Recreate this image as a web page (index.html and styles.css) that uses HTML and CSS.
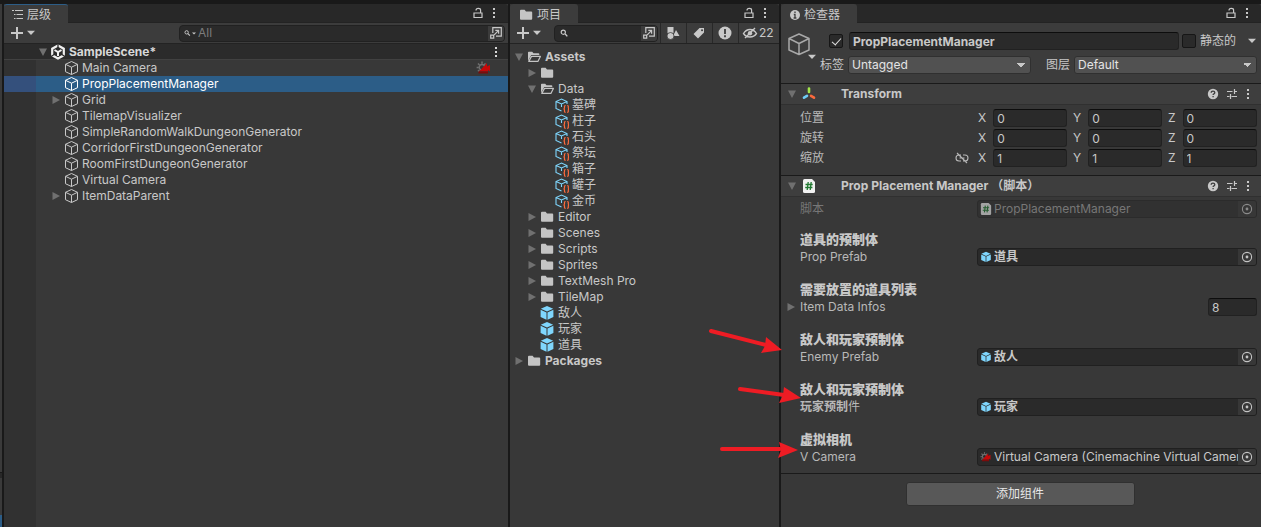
FILE: index.html
```html
<!DOCTYPE html>
<html lang="zh-CN">
<head>
<meta charset="utf-8">
<title>SampleScene</title>
<link rel="stylesheet" href="styles.css">
</head>
<body>
<svg class="defs" aria-hidden="true">
  <symbol id="cube" viewBox="0 0 16 16"><path d="M8.500 1.500 14.500 4.300v7.400L8.500 14.500l-6-2.800V4.300zM2.500 4.300l6 2.900 6-2.900M8.500 7.200v7.300" fill="none" stroke="currentColor" stroke-linejoin="round"/></symbol>
  <symbol id="prefab" viewBox="0 0 16 16"><path d="M8 1 14.200 3.800 8 6.600 1.800 3.800z" fill="#7fd6fd"/><path d="M1.600 4.700 7.500 7.400v7.400L1.600 12z" fill="#7fd6fd"/><path d="M14.400 4.700 8.500 7.400v7.400l5.900-2.800z" fill="#7fd6fd"/></symbol>
  <symbol id="asset" viewBox="0 0 16 16"><path d="M8.500 14 3 11.500v-7L8.500 2 14 4.500V7M3 4.500 8.500 7 14 4.500M8.500 7v3" fill="none" stroke="#7fd6fd" stroke-width="1.100"/><path d="M12.600 8.500c-1.500 0-1 1.500-1.100 2.300 0 .8-.5 1.100-1 1.100.5 0 1 .3 1 1.100.1.800-.4 2.300 1.100 2.300M14.200 8.500c1.500 0 1 1.500 1.100 2.300 0 .8.500 1.100 1 1.100-.5 0-1 .3-1 1.100-.1.800.4 2.300-1.100 2.300" fill="none" stroke="#ff6b3d" stroke-width="1.200"/></symbol>
  <symbol id="folder" viewBox="0 0 16 16"><path d="M2 3.800q0-1 1-1h3.600l1.400 1.600h5.200q1 0 1 1v6.400q0 1-1 1H3q-1 0-1-1z" fill="#c4c4c4"/></symbol>
  <symbol id="folder-open" viewBox="0 0 16 16"><path d="M2 12V3.600q0-.8.8-.8h3.400l1.300 1.500h5q.8 0 .8.800v1H5.200z" fill="#c4c4c4"/><path d="M2.800 12.400 5.500 7.400h8.900l-2.500 5z" fill="none" stroke="#c4c4c4" stroke-width="1.200" stroke-linejoin="round"/></symbol>
  <symbol id="right" viewBox="0 0 10 10"><path d="M1.500 1 9 5 1.500 9z" fill="#707070"/></symbol>
  <symbol id="down" viewBox="0 0 10 10"><path d="M1 1.500h8L5 9z" fill="#707070"/></symbol>
  <symbol id="caret" viewBox="0 0 8 6"><path d="M0 .8h8L4 5z" fill="currentColor"/></symbol>
  <symbol id="lock" viewBox="0 0 12 12"><path d="M2 6h8v4.500H2zM8.600 6V3.200Q8.600 1.400 6.300 1.400T4 3.400" fill="none" stroke="currentColor" stroke-width="1.200"/></symbol>
  <symbol id="dots" viewBox="0 0 4 12"><path d="M1 1h2v2H1zM1 5h2v2H1zM1 9h2v2H1z" fill="currentColor"/></symbol>
  <symbol id="plus" viewBox="0 0 12 12"><path d="M5 0h2v5h5v2H7v5H5V7H0V5h5z" fill="currentColor"/></symbol>
  <symbol id="search" viewBox="0 0 10 8"><circle cx="3.300" cy="3.200" r="2.100" fill="none" stroke="currentColor" stroke-width="1.200"/><path d="m5 4.800 2.300 2.600" stroke="currentColor" stroke-width="1.400"/></symbol>
  <symbol id="popup" viewBox="0 0 12 12"><path d="M2.800 6V.7h8.500v8.500H6" fill="none" stroke="currentColor" stroke-width="1.200"/><path d="M.7 8.200h3v3h-3zM4.200 7.800l4-4M5.300 3.400h3.300v3.300" fill="none" stroke="currentColor" stroke-width="1.200"/></symbol>
  <symbol id="help" viewBox="0 0 12 12"><circle cx="6" cy="6" r="5.200" fill="currentColor"/><path d="M4.200 4.800q0-1.700 1.800-1.700t1.800 1.500q0 .9-.9 1.300-.8.400-.8 1.100M6.100 8v1.200" fill="none" stroke="#3e3e3e" stroke-width="1.300"/></symbol>
  <symbol id="sliders" viewBox="0 0 12 12"><path d="M1 3.500h5.500M8.500 3.500H11M8.500 1v5M1 8.500h2.500M5.500 8.500H11M4.500 6v5" stroke="currentColor" stroke-width="1.200"/></symbol>
  <symbol id="target" viewBox="0 0 12 12"><circle cx="6" cy="6" r="4.600" fill="none" stroke="currentColor" stroke-width="1.100"/><circle cx="6" cy="6" r="1.400" fill="currentColor"/></symbol>
  <symbol id="camera" viewBox="0 0 16 14"><path d="M6 2.800V.6M3.500 4 2 2.500M2.800 6.600H.6M3.400 9l-1.500 1.300M8.200 3.800l1.300-1.400" stroke="#707070" stroke-width="1.500"/><circle cx="6" cy="6.300" r="2.800" fill="none" stroke="#707070" stroke-width="1.400"/><path d="M3 10.500 11 2v3.500l3-1.500v6.500l-2-1.500v1.500z" fill="#c60808"/><path d="M2.500 10.500H12v2H2.500z" fill="#7c0b0b"/></symbol>
  <symbol id="script" viewBox="0 0 14 14"><path d="M1 1.500Q1 0 2.500 0H10l3 3v9.500Q13 14 11.500 14h-9Q1 14 1 12.500z" fill="#f1f1f1"/><path d="m6.200 3-1 8M9.200 3l-1 8M3.500 5.500h7.200M3.200 8.500h7.200" stroke="#217a31" stroke-width="1.300"/></symbol>
</svg>

<div class="editor">
  <div class="edge"><i></i><b></b><em></em></div>

  <section class="panel hierarchy">
    <header class="tabs">
      <div class="tab active"><svg class="i12" viewBox="0 0 12 12"><path d="M0 1.500h2M3 1.500h8M2 5.500h1.500M4.500 5.500H11M2 9.500h1.500M4.500 9.500H11" stroke="currentColor" stroke-width="1.200"/></svg>层级</div>
      <div class="tab-actions"><svg class="i12"><use href="#lock"/></svg><svg class="dots"><use href="#dots"/></svg></div>
    </header>
    <div class="toolbar">
      <button class="add" aria-label="Add"><svg class="i12"><use href="#plus"/></svg><svg class="caret"><use href="#caret"/></svg></button>
      <div class="search wide"><svg class="mag"><use href="#search"/></svg><svg class="mini"><use href="#caret"/></svg><input type="text" placeholder="All" aria-label="Search hierarchy"><button class="pop" aria-label="Open search"><svg class="i12"><use href="#popup"/></svg></button></div>
    </div>
    <div class="tree">
      <div class="row scene"><span class="slot"><svg class="tri"><use href="#down"/></svg></span>
        <svg class="i16" viewBox="0 0 16 16"><path d="m8 1.500 5.800 3.200v6.600L8 14.500l-5.800-3.200V4.700z" fill="none" stroke="#f0f0f0" stroke-width="2.200"/><path d="m4.500 6 3.500 2 3.500-2M8 8v4" fill="none" stroke="#f0f0f0" stroke-width="2"/><path d="M8 0v4.500M1 12.500l3.200-2M15 12.500l-3.200-2" stroke="#2b2b2b" stroke-width="1.300"/></svg>
        <span>SampleScene*</span><svg class="dots end"><use href="#dots"/></svg></div>
      <div class="row d1"><span class="slot"></span><svg class="i16"><use href="#cube"/></svg><span>Main Camera</span><svg class="cam end"><use href="#camera"/></svg></div>
      <div class="row d1 selected"><span class="slot"></span><svg class="i16"><use href="#cube"/></svg><span>PropPlacementManager</span></div>
      <div class="row d1"><span class="slot"><svg class="tri"><use href="#right"/></svg></span><svg class="i16"><use href="#cube"/></svg><span>Grid</span></div>
      <div class="row d1"><span class="slot"></span><svg class="i16"><use href="#cube"/></svg><span>TilemapVisualizer</span></div>
      <div class="row d1"><span class="slot"></span><svg class="i16"><use href="#cube"/></svg><span>SimpleRandomWalkDungeonGenerator</span></div>
      <div class="row d1"><span class="slot"></span><svg class="i16"><use href="#cube"/></svg><span>CorridorFirstDungeonGenerator</span></div>
      <div class="row d1"><span class="slot"></span><svg class="i16"><use href="#cube"/></svg><span>RoomFirstDungeonGenerator</span></div>
      <div class="row d1"><span class="slot"></span><svg class="i16"><use href="#cube"/></svg><span>Virtual Camera</span></div>
      <div class="row d1"><span class="slot"><svg class="tri"><use href="#right"/></svg></span><svg class="i16"><use href="#cube"/></svg><span>ItemDataParent</span></div>
    </div>
  </section>

  <section class="panel project">
    <header class="tabs">
      <div class="tab"><svg class="i16"><use href="#folder"/></svg>项目</div>
      <div class="tab-actions"><svg class="i12"><use href="#lock"/></svg><svg class="dots"><use href="#dots"/></svg></div>
    </header>
    <div class="toolbar">
      <button class="add" aria-label="Add"><svg class="i12"><use href="#plus"/></svg><svg class="caret"><use href="#caret"/></svg></button>
      <div class="search"><svg class="mag"><use href="#search"/></svg><input type="text" aria-label="Search project"><button class="pop" aria-label="Open search"><svg class="i12"><use href="#popup"/></svg></button></div>
      <button class="tool" aria-label="Filter by type"><svg class="i14" viewBox="0 0 14 14"><path d="M1.500 1h6v6h-6zM10 4l3.500 6H7z" fill="currentColor"/><circle cx="4.500" cy="10" r="3.500" fill="currentColor" stroke="#3c3c3c" stroke-width=".8"/></svg></button>
      <button class="tool" aria-label="Filter by label"><svg class="i14" viewBox="0 0 14 14"><path d="M7.500 2H12v4.500L6 12.500 1.500 8zM10 3.200a1 1 0 1 0 .1 2 1 1 0 0 0-.1-2z" fill="currentColor" fill-rule="evenodd"/></svg></button>
      <button class="tool" aria-label="Errors"><svg class="i14" viewBox="0 0 14 14"><circle cx="7" cy="7" r="6.500" fill="currentColor"/><path d="M7 3v5M7 9.300v2" stroke="#3c3c3c" stroke-width="1.800"/></svg></button>
      <button class="tool hidden-count"><svg class="i14" viewBox="0 0 14 14"><path d="M.5 7.500Q3 3.500 7 3.500t6.500 4Q11 11 7 11 3 11 .5 7.500zM2 12 12 2" fill="none" stroke="currentColor" stroke-width="1.400"/><circle cx="7" cy="7.200" r="2.200" fill="currentColor"/></svg>22</button>
    </div>
    <div class="tree files">
      <div class="row bold"><span class="slot"><svg class="tri"><use href="#down"/></svg></span><svg class="i16"><use href="#folder-open"/></svg><span>Assets</span></div>
      <div class="row d1"><span class="slot"><svg class="tri"><use href="#right"/></svg></span><svg class="i16"><use href="#folder"/></svg></div>
      <div class="row d1"><span class="slot"><svg class="tri"><use href="#down"/></svg></span><svg class="i16"><use href="#folder-open"/></svg><span>Data</span></div>
      <div class="row d2"><span class="slot"></span><svg class="i16"><use href="#asset"/></svg><span>墓碑</span></div>
      <div class="row d2"><span class="slot"></span><svg class="i16"><use href="#asset"/></svg><span>柱子</span></div>
      <div class="row d2"><span class="slot"></span><svg class="i16"><use href="#asset"/></svg><span>石头</span></div>
      <div class="row d2"><span class="slot"></span><svg class="i16"><use href="#asset"/></svg><span>祭坛</span></div>
      <div class="row d2"><span class="slot"></span><svg class="i16"><use href="#asset"/></svg><span>箱子</span></div>
      <div class="row d2"><span class="slot"></span><svg class="i16"><use href="#asset"/></svg><span>罐子</span></div>
      <div class="row d2"><span class="slot"></span><svg class="i16"><use href="#asset"/></svg><span>金币</span></div>
      <div class="row d1"><span class="slot"><svg class="tri"><use href="#right"/></svg></span><svg class="i16"><use href="#folder"/></svg><span>Editor</span></div>
      <div class="row d1"><span class="slot"><svg class="tri"><use href="#right"/></svg></span><svg class="i16"><use href="#folder"/></svg><span>Scenes</span></div>
      <div class="row d1"><span class="slot"><svg class="tri"><use href="#right"/></svg></span><svg class="i16"><use href="#folder"/></svg><span>Scripts</span></div>
      <div class="row d1"><span class="slot"><svg class="tri"><use href="#right"/></svg></span><svg class="i16"><use href="#folder"/></svg><span>Sprites</span></div>
      <div class="row d1"><span class="slot"><svg class="tri"><use href="#right"/></svg></span><svg class="i16"><use href="#folder"/></svg><span>TextMesh Pro</span></div>
      <div class="row d1"><span class="slot"><svg class="tri"><use href="#right"/></svg></span><svg class="i16"><use href="#folder"/></svg><span>TileMap</span></div>
      <div class="row d1"><span class="slot"></span><svg class="i16"><use href="#prefab"/></svg><span>敌人</span></div>
      <div class="row d1"><span class="slot"></span><svg class="i16"><use href="#prefab"/></svg><span>玩家</span></div>
      <div class="row d1"><span class="slot"></span><svg class="i16"><use href="#prefab"/></svg><span>道具</span></div>
      <div class="row bold"><span class="slot"><svg class="tri"><use href="#right"/></svg></span><svg class="i16"><use href="#folder"/></svg><span>Packages</span></div>
    </div>
  </section>

  <section class="panel inspector">
    <header class="tabs">
      <div class="tab"><svg class="i12" viewBox="0 0 12 12"><circle cx="6" cy="6" r="5" fill="currentColor"/><path d="M6 2.500v1.600M4.800 5.500H6V9M4.600 9h2.800" fill="none" stroke="#3c3c3c" stroke-width="1.300"/></svg>检查器</div>
      <div class="tab-actions"><svg class="i12"><use href="#lock"/></svg><svg class="dots"><use href="#dots"/></svg></div>
    </header>
    <div class="object">
      <button class="object-icon" aria-label="Icon"><svg class="i24" viewBox="0 0 24 24"><path d="M11 2 21 6.500v11.500L11 22.500 1 18V6.500zM1 6.500 11 11.500l10-5M11 11.500v11" fill="none" stroke="#a8a8a8" stroke-width="1.500" stroke-linejoin="round"/></svg><svg class="caret"><use href="#caret"/></svg></button>
      <div class="object-rows">
        <div class="line">
          <input class="check" type="checkbox" checked aria-label="Active">
          <input class="field name" type="text" value="PropPlacementManager" aria-label="Name">
          <label class="static"><input class="check" type="checkbox">静态的</label>
          <button class="static-menu" aria-label="Static options"><svg class="caret"><use href="#caret"/></svg></button>
        </div>
        <div class="line second">
          <label for="tag">标签</label><select id="tag"><option>Untagged</option></select>
          <label for="layer" class="layer">图层</label><select id="layer"><option>Default</option></select>
        </div>
      </div>
    </div>

    <div class="component">
      <div class="head"><svg class="tri"><use href="#down"/></svg>
        <svg class="i16" viewBox="0 0 16 16"><path d="M8 2.500V6" stroke="#a4e84a" stroke-width="2.600" stroke-linecap="round"/><path d="m6 9.800-3 1.900" stroke="#6fcdf6" stroke-width="2.600" stroke-linecap="round"/><path d="m10 9.800 3 1.900" stroke="#f8693c" stroke-width="2.600" stroke-linecap="round"/></svg>
        <h2>Transform</h2><span class="head-actions"><svg class="i12"><use href="#help"/></svg><svg class="i12"><use href="#sliders"/></svg><svg class="dots"><use href="#dots"/></svg></span></div>
      <div class="vectors">
        <div class="vec"><span class="label">位置</span><div class="xyz"><label>X<input class="field" value="0"></label><label>Y<input class="field" value="0"></label><label>Z<input class="field" value="0"></label></div></div>
        <div class="vec"><span class="label">旋转</span><div class="xyz"><label>X<input class="field" value="0"></label><label>Y<input class="field" value="0"></label><label>Z<input class="field" value="0"></label></div></div>
        <div class="vec"><span class="label linked">缩放<svg class="i14" viewBox="0 0 14 14"><path d="M6 4H4a3 3 0 0 0 0 6h2M8 4h2a3 3 0 0 1 0 6H8M4.500 7h5M2 2l10 10" fill="none" stroke="currentColor" stroke-width="1.100"/></svg></span><div class="xyz"><label>X<input class="field" value="1"></label><label>Y<input class="field" value="1"></label><label>Z<input class="field" value="1"></label></div></div>
      </div>
    </div>

    <div class="component">
      <div class="head"><svg class="tri"><use href="#down"/></svg><svg class="i16 file"><use href="#script"/></svg>
        <h2>Prop Placement Manager （脚本）</h2><span class="head-actions"><svg class="i12"><use href="#help"/></svg><svg class="i12"><use href="#sliders"/></svg><svg class="dots"><use href="#dots"/></svg></span></div>
      <div class="props">
        <div class="prop disabled"><span class="label">脚本</span><div class="ref"><svg class="i12"><use href="#script"/></svg><span>PropPlacementManager</span><button disabled aria-label="Select"><svg class="i12"><use href="#target"/></svg></button></div></div>
        <h3>道具的预制体</h3>
        <div class="prop"><span class="label">Prop Prefab</span><div class="ref strong"><svg class="i12"><use href="#prefab"/></svg><span>道具</span><button aria-label="Select"><svg class="i12"><use href="#target"/></svg></button></div></div>
        <h3>需要放置的道具列表</h3>
        <div class="prop list"><svg class="tri"><use href="#right"/></svg><label class="label" for="count">Item Data Infos</label><input id="count" class="field count" value="8"></div>
        <h3>敌人和玩家预制体</h3>
        <div class="prop"><span class="label">Enemy Prefab</span><div class="ref strong"><svg class="i12"><use href="#prefab"/></svg><span>敌人</span><button aria-label="Select"><svg class="i12"><use href="#target"/></svg></button></div></div>
        <h3>敌人和玩家预制体</h3>
        <div class="prop"><span class="label"><b>玩家预制</b>件</span><div class="ref strong"><svg class="i12"><use href="#prefab"/></svg><span>玩家</span><button aria-label="Select"><svg class="i12"><use href="#target"/></svg></button></div></div>
        <h3>虚拟相机</h3>
        <div class="prop"><span class="label">V Camera</span><div class="ref"><svg class="i12"><use href="#camera"/></svg><span>Virtual Camera (Cinemachine Virtual Camera)</span><button aria-label="Select"><svg class="i12"><use href="#target"/></svg></button></div></div>
      </div>
    </div>
    <div class="footer"><button class="add-component">添加组件</button></div>

    <svg class="arrows" viewBox="0 0 100 140" aria-hidden="true">
      <g stroke="#ee1c24" stroke-width="4" stroke-linecap="round"><path d="m11 11 55 14M40 69l44 6M22 129h58"/></g>
      <g fill="#ee1c24"><path d="M82 30 66 17l-1 9-4 7zM101 78 84 67l-1 8-4 8zM98 130l-19-8 2 8-3 8z"/></g>
    </svg>
  </section>
</div>
</body>
</html>
```
FILE: styles.css
```css
* { box-sizing: border-box; }
body {
  margin: 0;
  background: #191919;
  color: #c8c8c8;
  font: 12px/16px Inter, "Noto Sans CJK SC", sans-serif;
}
button, input, select { font: inherit; color: inherit; margin: 0; }
button { border: 0; padding: 0; background: none; }
svg { display: block; flex: none; overflow: visible; }
.defs { position: absolute; width: 0; height: 0; }
.i12 { width: 12px; height: 12px; }
.i14 { width: 14px; height: 14px; }
.i16 { width: 16px; height: 16px; }
.i24 { width: 24px; height: 24px; }
.tri { width: 10px; height: 10px; }
.dots { width: 4px; height: 12px; }
.caret { width: 8px; height: 6px; }

.editor {
  display: grid;
  grid-template-columns: 2px 504fr 269fr 480fr;
  gap: 2px;
  min-height: 100vh;
  padding-top: 4px;
}
.edge { display: flex; flex-direction: column; background: #3a3a3a; }
.edge i { height: 469px; border-bottom: 1px solid #191919; }
.edge b { height: 42px; background: linear-gradient(#282828 5px, #3a3a3a 5px); }
.edge em { flex: 1; background: #2c5d87; }
.panel { position: relative; min-width: 0; background: #383838; }

.tabs { display: flex; justify-content: space-between; height: 19px; background: #282828; border-bottom: 1px solid #232323; border-radius: 3px 3px 0 0; }
.tab { display: flex; align-items: center; gap: 3px; height: 19px; padding: 2px 17px 0 8px; background: #3c3c3c; border-radius: 3px 3px 0 0; }
.tab.active { border-top: 1px solid #2c5d87; }
.tab-actions { display: flex; align-items: center; gap: 8px; padding-right: 12px; }
.toolbar { display: flex; align-items: center; height: 21px; background: #3c3c3c; border-bottom: 1px solid #232323; }
.add { display: flex; align-items: center; gap: 4px; padding-left: 7px; }
.search { display: flex; align-items: center; flex: 1; height: 17px; margin-left: 14px; padding-left: 5px; background: #2a2a2a; border: 1px solid #212121; border-radius: 4px; overflow: hidden; }
.search.wide { margin: 0 3px 0 144px; padding-left: 4px; }
.search input { flex: 1; width: 0; min-width: 0; padding: 0 0 0 4px; border: 0; background: none; outline: 0; }
.search input::placeholder { color: #7c7c7c; }
.mag { width: 10px; height: 8px; }
.mini { width: 4px; height: 3px; }
.wide .mag { width: 8px; }
.wide .mini { margin-right: -2px; }
.pop { display: grid; place-items: center; width: 16px; height: 16px; background: #3c3c3c; }
.tool { display: grid; place-items: center; width: 26px; height: 20px; border-left: 1px solid #282828; }
.search + .tool { margin-left: 2px; }
.tool.hidden-count { display: flex; align-items: center; gap: 2px; width: 41px; padding-left: 4px; }
.project .search { margin-left: 13px; }
.hidden-count + *, .project .tool:not(.hidden-count) { padding-right: 1px; }

.row { display: flex; align-items: center; height: 16px; padding-left: 2px; line-height: 16px; white-space: nowrap; }
.row > span:not(.slot) { margin-left: 3px; }
.slot { width: 14px; padding-left: 2px; }
.files { padding-top: 5px; }
.files .d1 { padding-left: 15px; }
.files .d2 { padding-left: 29px; }
.bold { font-weight: 700; }
.hierarchy { display: flex; flex-direction: column; }
.hierarchy .tree { flex: 1; background: linear-gradient(90deg, #313131 32px, #383838 32px); }
.hierarchy .row { padding-left: 32px; }
.hierarchy .d1 { padding-left: 45px; }
.hierarchy .scene { background: #2b2b2b; border-bottom: 1px solid #414141; font-weight: 700; color: #d8d8d8; }
.hierarchy .selected { background: linear-gradient(90deg, #34507c 32px, #2c5d87 32px); color: #fff; }
.end { margin-left: auto; margin-right: 10px; }
.cam { width: 16px; height: 14px; margin-right: 16px; }

.object { display: flex; height: 61px; background: #3c3c3c; padding: 9px 4px 0 7px; border-bottom: 1px solid #1a1a1a; }
.object-icon { display: flex; align-items: flex-end; width: 32px; height: 28px; }
.object-icon .i24 { align-self: flex-start; margin-right: -4px; }
.object-rows { flex: 1; min-width: 0; }
.line { display: flex; align-items: center; height: 18px; padding-left: 9px; }
.line.second { margin-top: 6px; padding-left: 0; gap: 4px; }
.line.second .layer { margin-left: 11px; }
.field { display: block; min-width: 0; height: 18px; padding: 0 3px; background: #2a2a2a; border: 1px solid #212121; border-top-color: #0d0d0d; border-radius: 3px; outline: 0; }
.name { flex: 1; margin: 0 3px 0 6px; font-weight: 700; }
.check { appearance: none; display: grid; place-items: center; width: 14px; height: 14px; background: #2a2a2a; border: 1px solid #161616; border-radius: 2px; }
.check:checked::before { content: ""; width: 8px; height: 4px; border: solid #e0e0e0; border-width: 0 0 1px 1px; transform: translateY(-1px) rotate(-48deg); }
.static { display: flex; align-items: center; gap: 4px; }
.static-menu { display: grid; place-items: center; margin-left: 11px; width: 10px; height: 16px; }
select { appearance: none; flex: 1; height: 18px; padding: 0 3px; color: #e4e4e4; background: #515151 conic-gradient(from 315deg at 50% 100%, #c8c8c8 90deg, transparent 0) no-repeat right 5px center / 8px 4px; border: 1px solid #303030; border-radius: 3px; }

.component { border-bottom: 1px solid #1a1a1a; }
.head { display: flex; align-items: center; height: 21px; padding: 0 11px 0 6px; background: #3e3e3e; border-bottom: 1px solid #303030; }
.head .i16 { margin-left: 4px; }
.head .file { height: 14px; }
.head h2 { margin: 0 0 0 24px; font: inherit; font-weight: 700; }
.head-actions { display: flex; align-items: center; gap: 8px; margin-left: auto; }
.head-actions .i12:first-child { margin-right: -1px; }
.vectors { display: grid; gap: 2px; padding: 4px 4px 8px 19px; }
.vec, .prop { display: grid; grid-template-columns: 177fr 280fr; align-items: center; height: 18px; }
.linked { display: flex; align-items: center; justify-content: space-between; padding-right: 8px; }
.xyz { display: grid; grid-template-columns: repeat(3, 1fr); gap: 5px; }
.xyz label { display: flex; align-items: center; gap: 7px; padding-left: 1px; }
.xyz input { flex: 1; width: 0; }
.props { padding: 3px 4px 7px 19px; }
.props h3 { margin: 0; padding-top: 14px; font: 900 13px/18px "Noto Sans CJK SC", sans-serif; }
.props .disabled + h3 { padding-top: 12px; }
.label { color: #b8b8b8; }
.disabled { color: #777; }
.disabled .label { color: #777; }
.ref { display: flex; align-items: center; height: 18px; padding-left: 2px; background: #2a2a2a; border: 1px solid #202020; border-radius: 3px; overflow: hidden; white-space: nowrap; }
.ref > span { flex: 1; min-width: 0; margin-left: 2px; overflow: hidden; }
.ref button { display: grid; place-items: center; width: 18px; height: 16px; background: #373737; color: #c4c4c4; }
.ref.strong { font-weight: 700; }
.disabled .ref { background: #313131; border-color: #2b2b2b; }
.disabled .ref svg { opacity: .6; }
.list { position: relative; }
.list .tri { position: absolute; left: -14px; }
.count { justify-self: end; width: 49px; }
.footer { display: flex; justify-content: center; padding: 8px 2px 0 0; }
.add-component { width: 229px; height: 24px; background: #585858; border: 1px solid #303030; border-radius: 3px; color: #e8e8e8; }
.arrows { position: absolute; left: -81px; top: 316px; width: 100px; height: 140px; pointer-events: none; }
```
